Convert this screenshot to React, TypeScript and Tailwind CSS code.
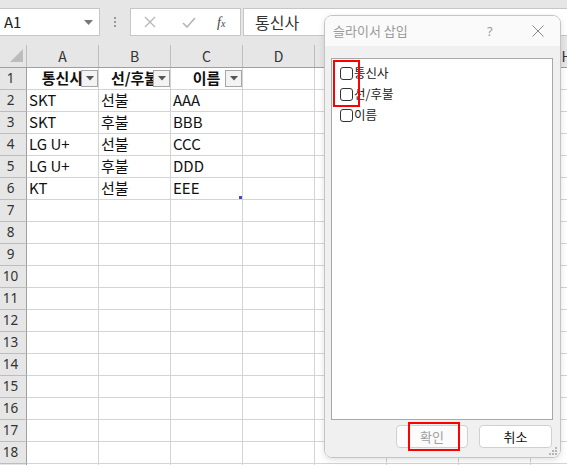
import React from "react";

const cols = ["A", "B", "C", "D", "E", "F", "G", "H"];
const data: string[][] = [
  ["SKT", "선불", "AAA"],
  ["SKT", "후불", "BBB"],
  ["LG U+", "선불", "CCC"],
  ["LG U+", "후불", "DDD"],
  ["KT", "선불", "EEE"],
];
const headers = ["통신사", "선/후불", "이름"];

function FilterBtn() {
  return (
    <div className="absolute right-[0px] top-[2px] w-[17px] h-[17px] border border-[#a6a6a6] bg-[#f3f3f3] flex items-center justify-center">
      <svg width="8" height="5" viewBox="0 0 8 5">
        <path d="M0 0 L8 0 L4 4.5 Z" fill="#555" />
      </svg>
    </div>
  );
}

function Checkbox({ label }: { label: string }) {
  return (
    <div className="flex items-center h-[21px]">
      <div className="w-[13px] h-[13px] rounded-[3px] border border-[#333] bg-white" />
      <span className="ml-[1px] text-[12.5px] text-[#222] leading-none">{label}</span>
    </div>
  );
}

export default function App() {
  const rows = Array.from({ length: 19 }, (_, i) => i + 1);
  return (
    <div className="relative w-[567px] h-[465px] overflow-hidden bg-white font-['Noto_Sans_CJK_KR','Noto_Sans',sans-serif] text-[#111]">
      {/* top bar */}
      <div className="h-[45px] bg-[#e6e6e6] flex items-start pt-[8px]">
        <div className="w-[100px] h-[28px] bg-white border border-[#c6c6c6] border-l-0 flex items-center justify-between pl-[4px] pr-[6px]">
          <span className="text-[15px] text-[#222]">A1</span>
          <svg width="9" height="5" viewBox="0 0 9 5">
            <path d="M0 0 L9 0 L4.5 5 Z" fill="#777" />
          </svg>
        </div>
        <div className="w-[30px] h-[28px] flex flex-col items-center justify-center gap-[2px]">
          <div className="w-[2px] h-[2px] bg-[#999]" />
          <div className="w-[2px] h-[2px] bg-[#999]" />
          <div className="w-[2px] h-[2px] bg-[#999]" />
        </div>
        <div className="w-[111px] h-[28px] bg-white border border-[#c6c6c6] flex items-center">
          <svg className="ml-[13px]" width="12" height="12" viewBox="0 0 12 12">
            <path d="M1 1 L11 11 M11 1 L1 11" stroke="#b5b5b5" strokeWidth="1.3" />
          </svg>
          <svg className="ml-[26px]" width="14" height="11" viewBox="0 0 14 11">
            <path d="M1 6 L5 10 L13 1" stroke="#b5b5b5" strokeWidth="1.6" fill="none" />
          </svg>
          <span className="ml-[21px] text-[14px] italic font-['Liberation_Serif',serif] text-[#444]">
            f<span className="text-[10px]">x</span>
          </span>
        </div>
        <div className="ml-[2px] flex-1 h-[28px] bg-white border border-[#c6c6c6] border-r-0 flex items-center pl-[11px]">
          <span className="text-[16px] text-[#333]">통신사</span>
        </div>
      </div>

      {/* column header */}
      <div className="flex h-[23px] bg-[#e6e6e6] border-b border-[#9f9f9f]">
        <div className="w-[27px] shrink-0 border-r border-[#bdbdbd] relative">
          <svg className="absolute left-[10px] top-[4px]" width="13" height="13" viewBox="0 0 13 13">
            <path d="M13 0 L13 13 L0 13 Z" fill="#bcbcbc" />
          </svg>
        </div>
        {cols.map((c) => (
          <div
            key={c}
            className="w-[72px] shrink-0 border-r border-[#bdbdbd] flex items-center justify-center text-[14px] text-[#333]"
          >
            {c}
          </div>
        ))}
      </div>

      {/* rows */}
      {rows.map((r) => (
        <div key={r} className="flex h-[22px]">
          <div className="w-[27px] shrink-0 bg-[#e6e6e6] border-r border-[#9f9f9f] border-b border-b-[#bdbdbd] flex items-center justify-center pr-[5px] text-[13.5px] text-[#333] font-['Noto_Sans',sans-serif]">
            {r <= 18 ? r : ""}
          </div>
          {cols.map((c, ci) => {
            const isHeader = r === 1 && ci < 3;
            const val = r >= 2 && r <= 6 && ci < 3 ? data[r - 2][ci] : "";
            return (
              <div
                key={c}
                className="relative w-[72px] shrink-0 border-r border-b border-[#d4d4d4] overflow-hidden"
              >
                {isHeader ? (
                  <>
                    <div className="absolute inset-0 flex items-center justify-center font-bold text-[15px] text-[#111] whitespace-nowrap">
                      {headers[ci]}
                    </div>
                    <FilterBtn />
                  </>
                ) : (
                  <div className="h-full flex items-center pl-[2px] text-[15px] text-[#111] whitespace-nowrap">
                    {val}
                  </div>
                )}
                {r === 6 && ci === 2 && (
                  <div className="absolute right-[0px] bottom-[0px] w-[3px] h-[3px] bg-[#3f51b5]" />
                )}
              </div>
            );
          })}
        </div>
      ))}

      {/* dialog */}
      <div className="absolute left-[324px] top-[15px] w-[237px] h-[443px] rounded-[8px] border border-[#c4c4c4] overflow-hidden flex flex-col shadow-[0_2px_6px_rgba(0,0,0,0.12)]">
        <div className="h-[30px] bg-[#fafafa] flex items-center pl-[8px] relative">
          <span className="text-[13px] text-[#9a9a9a]">슬라이서 삽입</span>
          <span className="absolute left-[162px] top-[6px] text-[13px] text-[#9a9a9a] font-['Noto_Sans',sans-serif]">?</span>
          <svg className="absolute left-[207px] top-[9px]" width="12" height="12" viewBox="0 0 12 12">
            <path d="M0.5 0.5 L11.5 11.5 M11.5 0.5 L0.5 11.5" stroke="#8a8a8a" strokeWidth="1" />
          </svg>
        </div>
        <div className="flex-1 bg-[#f0f0f0] flex flex-col pt-[12px] pl-[6px] pr-[7px] relative">
          <div className="h-[362px] bg-white border border-[#a8a8a8] pt-[4px] pl-[8px]">
            <Checkbox label="통신사" />
            <Checkbox label="선/후불" />
            <Checkbox label="이름" />
          </div>
          <div className="flex justify-end gap-[11px] mt-[5px] pr-[1px]">
            <div className="w-[72px] h-[23px] rounded-[4px] border border-[#d0d0d0] bg-[#fbfbfb] flex items-center justify-center text-[13px] text-[#a0a0a0]">
              확인
            </div>
            <div className="w-[73px] h-[23px] rounded-[4px] border border-[#d0d0d0] bg-white flex items-center justify-center text-[13px] text-[#111]">
              취소
            </div>
          </div>
          <svg className="absolute right-[3px] bottom-[2px]" width="8" height="8" viewBox="0 0 8 8">
            <rect x="6" y="0" width="2" height="2" fill="#b5b5b5" />
            <rect x="3" y="3" width="2" height="2" fill="#b5b5b5" />
            <rect x="6" y="3" width="2" height="2" fill="#b5b5b5" />
            <rect x="0" y="6" width="2" height="2" fill="#b5b5b5" />
            <rect x="3" y="6" width="2" height="2" fill="#b5b5b5" />
            <rect x="6" y="6" width="2" height="2" fill="#b5b5b5" />
          </svg>
        </div>
      </div>

      {/* red highlight boxes */}
      <div className="absolute left-[333px] top-[60px] w-[27px] h-[47px] border-[2px] border-[#ff0000]" />
      <div className="absolute left-[408px] top-[422px] w-[52px] h-[29px] border-[2px] border-[#ff0000]" />
    </div>
  );
}
